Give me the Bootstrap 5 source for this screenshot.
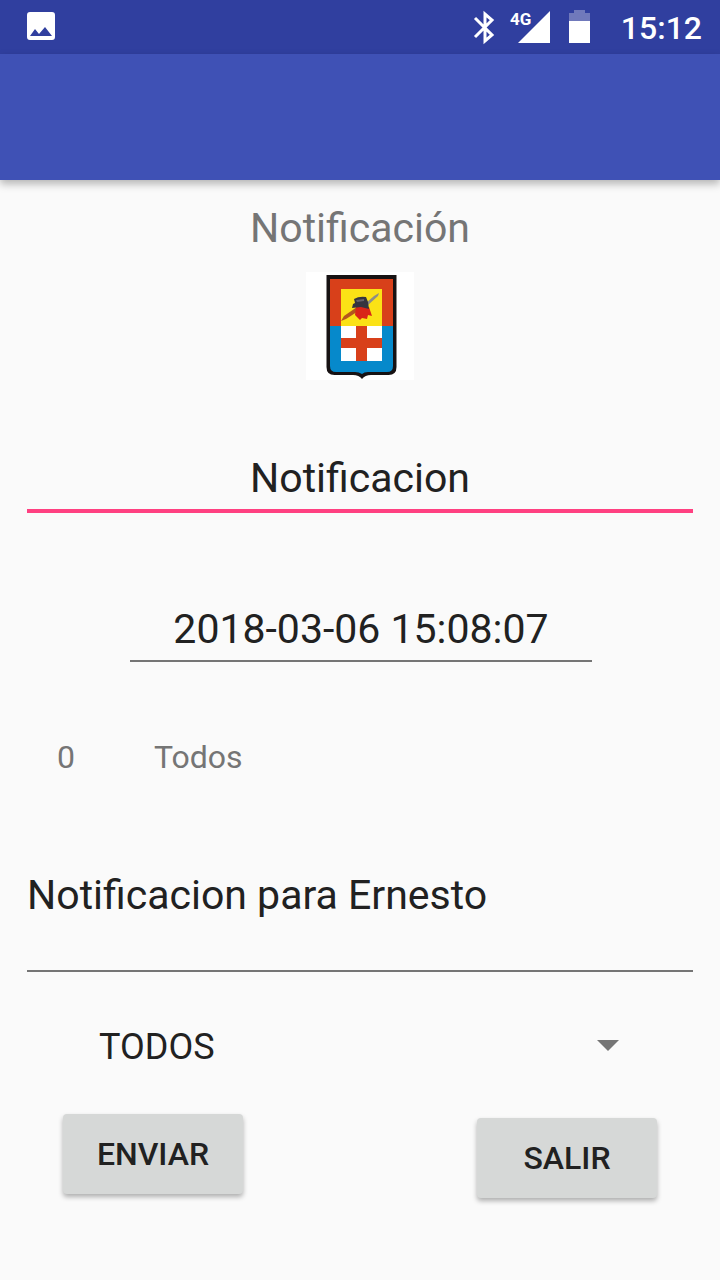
<!DOCTYPE html>
<html lang="es">
<head>
<meta charset="utf-8">
<meta name="viewport" content="width=device-width, initial-scale=1">
<title>Notificación</title>
<link href="https://cdn.jsdelivr.net/npm/bootstrap@5.3.0/dist/css/bootstrap.min.css" rel="stylesheet">
<style>
  body { font-family: Roboto, "Noto Sans", sans-serif; background: #fafafa; color: #212121; }
  .status-bar { height: 54px; background: #303f9f; padding: 0 18px 0 26px; }
  .app-toolbar { height: 126px; background: #3f51b5; box-shadow: 0 4px 8px rgba(0,0,0,.28); }
  .clock { font-size: 32px; line-height: 40px; font-weight: 500; margin-left: 27px; padding-top: 2px; }
  .screen { padding: 24px 27px; }
  .text-large { font-size: 41px; line-height: 48px; }
  .text-medium { font-size: 32px; line-height: 40px; }
  .muted { color: #757575; }
  .crest { margin: 20px 0 74px; }
  .line-field, .line-field:focus { border: 0; border-radius: 0; background: transparent; color: #212121; padding: 0 0 7px; box-shadow: none; outline: 0; border-bottom: 2px solid #757575; }
  .line-field.is-current { border-bottom: 4px solid #ff4081; }
  .date-row { margin: 92px 101px 75px 103px; }
  .target-row { padding: 0 30px; gap: 79px; margin-bottom: 94px; }
  .message-box { height: 101px; resize: none; overflow: hidden; }
  .spinner-row { margin: 53px 54px 45px 72px; }
  .spinner-select, .spinner-select:focus { font-size: 36px; line-height: 44px; border: 0; border-radius: 0; box-shadow: none; color: #212121; padding: 0 40px 0 0; background-color: transparent; background-size: 22px 11px; background-position: right 20px top 15px;
    background-image: url("data:image/svg+xml,%3Csvg xmlns='http://www.w3.org/2000/svg' viewBox='0 0 22 11'%3E%3Cpath fill='%23757575' d='M0 0h22L11 11z'/%3E%3C/svg%3E"); }
  .actions { padding: 0 36px; }
  .btn-raised, .btn-raised:hover { width: 180px; height: 80px; border: 0; border-radius: 4px; background: #d6d8d7; color: #212121; font-weight: 500; box-shadow: 0 3px 5px rgba(0,0,0,.3); }
</style>
</head>
<body>
<header>
  <div class="status-bar d-flex align-items-center justify-content-between text-white">
    <svg width="30" height="30" viewBox="0 0 30 30" aria-hidden="true"><path fill="#fff" fill-rule="evenodd" d="M4 0h22q3 0 3 3v22q0 3-3 3H4q-3 0-3-3V3q0-3 3-3zM4 24h22l-7-9-6 7-4-5z"/></svg>
    <div class="d-flex align-items-center">
      <svg width="122" height="36" viewBox="0 0 122 36" aria-hidden="true">
        <path fill="none" stroke="#fff" stroke-width="3" d="M3 9l17 17-7 6V5l7 6L3 28"/>
        <text x="38" y="16" font-size="17" font-weight="700" fill="#fff">4G</text>
        <path fill="#fff" d="M78 2v32H46z"/>
        <path fill="#7079bb" d="M102 1h11v3h5v8H97V4h5z"/>
        <path fill="#fff" d="M97 12h21v22H97z"/>
      </svg>
      <span class="clock">15:12</span>
    </div>
  </div>
  <div class="app-toolbar"></div>
</header>
<main class="screen">
  <h1 class="text-large muted fw-normal text-center m-0">Notificación</h1>
  <div class="crest d-flex justify-content-center">
    <svg width="108" height="108" viewBox="0 0 108 108" role="img" aria-label="Escudo">
      <path fill="#fff" d="M0 0h108v108H0z"/>
      <path fill="#171213" d="M20.500 3H90.500v92q0 8-8 8H65q-6 0-9 4-3-4-9-4H28.500q-8 0-8-8z"/>
      <path fill="#d8401a" d="M24 7h63v47H24z"/>
      <path fill="#0689cb" d="M24 54h63v40q0 6-6 6H62q-4 0-6 2-3-2-7-2H30q-6 0-6-6z"/>
      <path fill="#fbe216" d="M35 17h41v37H35z"/>
      <path fill="#fff" d="M35 54h41v35H35z"/>
      <path fill="#d8401a" d="M50 54h11v35H50zM35 66h41v10H35z"/>
      <path fill="#b4551d" d="M35 49l3-5 13-9 3 3-14 9z"/>
      <path fill="#8e8d86" d="M60 31l8-7 5-3-1 3-10 9z"/>
      <path fill="#d92518" d="M50 35l13 0 3 9-4-1-1 4-5-1-2 2-5-5z"/>
      <path fill="#35353f" d="M48 27q5-3 12-2l2 5 1 7-8-2-9 1 1-4 2-1z"/>
      <path fill="#66636c" d="M50 28l8-1v2l-7 1z"/>
    </svg>
  </div>
  <form>
    <input type="text" aria-label="Título" class="form-control line-field is-current text-large text-center" value="Notificacion">
    <div class="date-row">
      <input type="text" aria-label="Fecha" class="form-control line-field text-large text-center" value="2018-03-06 15:08:07">
    </div>
    <div class="target-row d-flex text-medium muted"><span>0</span><span>Todos</span></div>
    <textarea aria-label="Mensaje" class="form-control line-field message-box text-large">Notificacion para Ernesto</textarea>
    <div class="spinner-row">
      <select aria-label="Destino" class="form-select spinner-select"><option>TODOS</option></select>
    </div>
    <div class="actions d-flex justify-content-between align-items-start">
      <button type="button" class="btn btn-raised text-medium">ENVIAR</button>
      <button type="button" class="btn btn-raised text-medium mt-1">SALIR</button>
    </div>
  </form>
</main>
<script src="https://cdn.jsdelivr.net/npm/bootstrap@5.3.0/dist/js/bootstrap.bundle.min.js"></script>
</body>
</html>
